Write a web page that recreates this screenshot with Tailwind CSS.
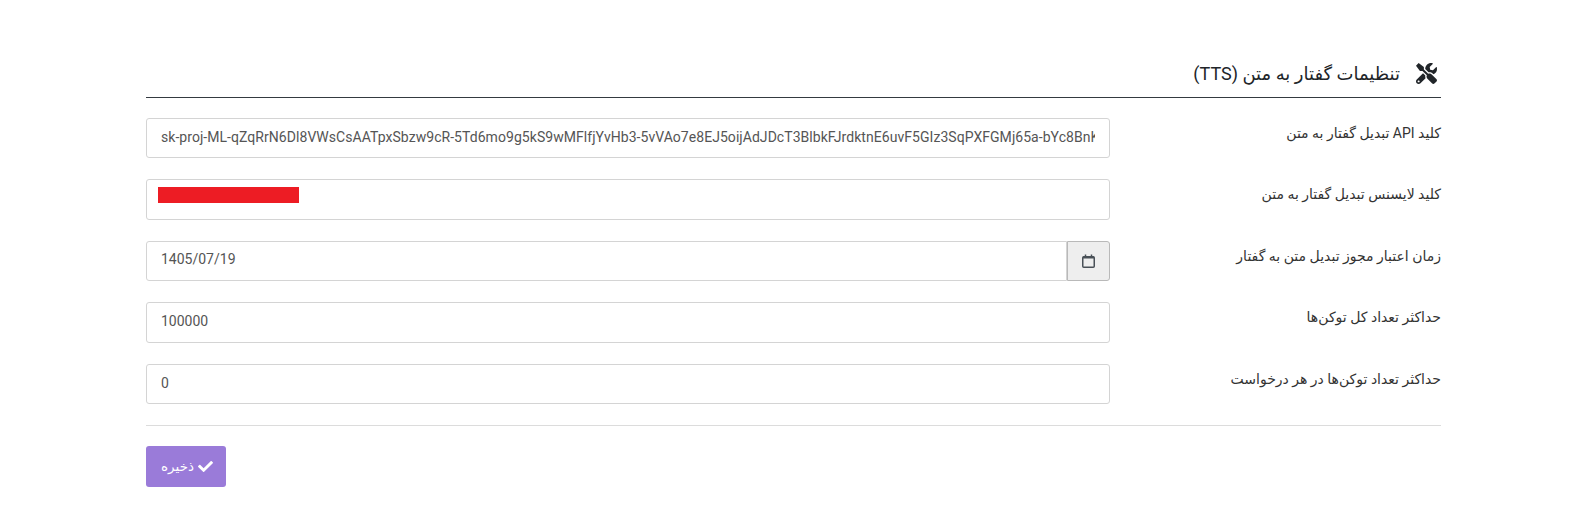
<!DOCTYPE html>
<html lang="fa" dir="rtl">
    <head>
        <meta charset="UTF-8">
        <title>تنظیمات گفتار به متن</title>
        <script src="https://cdn.jsdelivr.net/npm/@tailwindcss/browser@4"></script>
    </head>
    <body class="bg-white font-['Roboto','DejaVu_Sans',sans-serif] text-[#212529]">
        <main class="pt-[58px] pl-[146px] pr-[153px]">

            <!-- Title -->
            <div class="flex items-center gap-[16px] h-[40px] pr-[4px] pb-[9px] border-b-[1.5px] border-[#343a40]">
                <svg class="w-[21px] h-[21px] fill-[#212529]" viewBox="0 0 512 512"><path d="M501.1 395.7L384 278.6c-23.1-23.1-57.6-27.6-85.4-13.9L192 158.1V96L64 0 0 64l96 128h62.1l106.6 106.6c-13.6 27.8-9.2 62.3 13.9 85.4l117.1 117.1c14.6 14.6 38.2 14.6 52.7 0l52.7-52.7c14.5-14.6 14.5-38.2-.1-52.7zM331.7 225c28.3 0 54.9 11 74.9 31l19.4 19.4c15.8-6.9 30.8-16.5 43.8-29.5 37.1-37.1 49.7-89.3 37.9-136.7-2.2-9-13.5-12.1-20.1-5.5l-74.4 74.4-67.9-11.3L334 98.9l74.4-74.4c6.6-6.6 3.4-17.9-5.7-20.2-47.4-11.7-99.6.9-136.6 37.9-28.5 28.5-41.9 66.1-41.2 103.6l82.1 82.1c8.1-1.9 16.5-2.9 24.7-2.9zm-103.9 82l-56.7-56.7L18.7 402.8c-25 25-25 65.5 0 90.5s65.5 25 90.5 0l123.6-123.6c-7.6-19.9-9.9-41.6-5-62.7zM64 472c-13.2 0-24-10.8-24-24 0-13.3 10.7-24 24-24s24 10.7 24 24c0 13.2-10.7 24-24 24z"/></svg>
                <h2 class="text-[18px]">تنظیمات گفتار به متن (TTS)</h2>
            </div>

            <!-- Form rows -->
            <form class="flex flex-col gap-[21px] pt-[19.5px] pb-[20.5px] border-b border-[#dcdcdc]">
                <div class="flex justify-between h-[40.5px]">
                    <label class="text-[14px] leading-[30px] text-[#333]">کلید API تبدیل گفتار به متن</label>
                    <input dir="ltr" class="w-[964px] h-full px-[14px] pb-[2px] text-[14px] tracking-[0.05px] text-[#555] border border-[#d4d4d4] rounded-[3px]" value="sk-proj-ML-qZqRrN6Dl8VWsCsAATpxSbzw9cR-5Td6mo9g5kS9wMFlfjYvHb3-5vVAo7e8EJ5oijAdJDcT3BlbkFJrdktnE6uvF5GIz3SqPXFGMj65a-bYc8BnKxQ2rT7wLm">
                </div>
                <div class="flex justify-between h-[40.5px]">
                    <label class="text-[14px] leading-[30px] text-[#333]">کلید لایسنس تبدیل گفتار به متن</label>
                    <div class="relative w-[964px] h-full border border-[#d4d4d4] rounded-[3px]">
                        <div class="absolute left-[11px] top-[7px] w-[141px] h-[16px] bg-[#ed1c24]"></div>
                    </div>
                </div>
                <div class="flex justify-between h-[40.5px]">
                    <label class="text-[14px] leading-[30px] text-[#333]">زمان اعتبار مجوز تبدیل متن به گفتار</label>
                    <div dir="ltr" class="flex w-[964px] h-full">
                        <input class="flex-1 min-w-0 px-[14px] pb-[2px] text-[14px] text-[#555] border border-[#d4d4d4] rounded-l-[3px]" value="1405/07/19">
                        <div class="flex items-center justify-center w-[43px] bg-[#eeeeee] border border-[#b9b9b9] rounded-r-[3px]">
                            <svg class="w-[13px] h-[14px]" viewBox="0 0 13 14" fill="none" stroke="#495057"><rect x=".75" y="2.75" width="11.5" height="10.5" rx="1" stroke-width="1.5"/><path d="M1 3.5h11" stroke-width="2"/><path d="M3.5 .5v2M9.5 .5v2" stroke-width="1.5"/></svg>
                        </div>
                    </div>
                </div>
                <div class="flex justify-between h-[40.5px]">
                    <label class="text-[14px] leading-[30px] text-[#333]">حداکثر تعداد کل توکن‌ها</label>
                    <input dir="ltr" class="w-[964px] h-full px-[14px] pb-[2px] text-[14px] text-[#555] border border-[#d4d4d4] rounded-[3px]" value="100000">
                </div>
                <div class="flex justify-between h-[40.5px]">
                    <label class="text-[14px] leading-[30px] text-[#333]">حداکثر تعداد توکن‌ها در هر درخواست</label>
                    <input dir="ltr" class="w-[964px] h-full px-[14px] pb-[2px] text-[14px] text-[#555] border border-[#d4d4d4] rounded-[3px]" value="0">
                </div>
            </form>

            <!-- Save -->
            <div class="flex justify-end pt-[20px]">
                <button class="flex items-center justify-center gap-[4px] w-[80px] h-[41px] pl-[2px] bg-[#9a7bd9] rounded-[3px] text-white text-[13.5px]">
                    <svg class="w-[15px] h-[15px] fill-white" viewBox="0 0 512 512"><path d="M173.898 439.404l-166.4-166.4c-9.997-9.997-9.997-26.206 0-36.204l36.203-36.204c9.997-9.998 26.207-9.998 36.204 0L192 312.69 432.095 72.596c9.997-9.997 26.207-9.997 36.204 0l36.203 36.204c9.997 9.997 9.997 26.206 0 36.204l-294.4 294.401c-9.998 9.997-26.207 9.997-36.204-.001z"/></svg>
                    <span>ذخیره</span>
                </button>
            </div>
        </main>
    </body>
</html>
